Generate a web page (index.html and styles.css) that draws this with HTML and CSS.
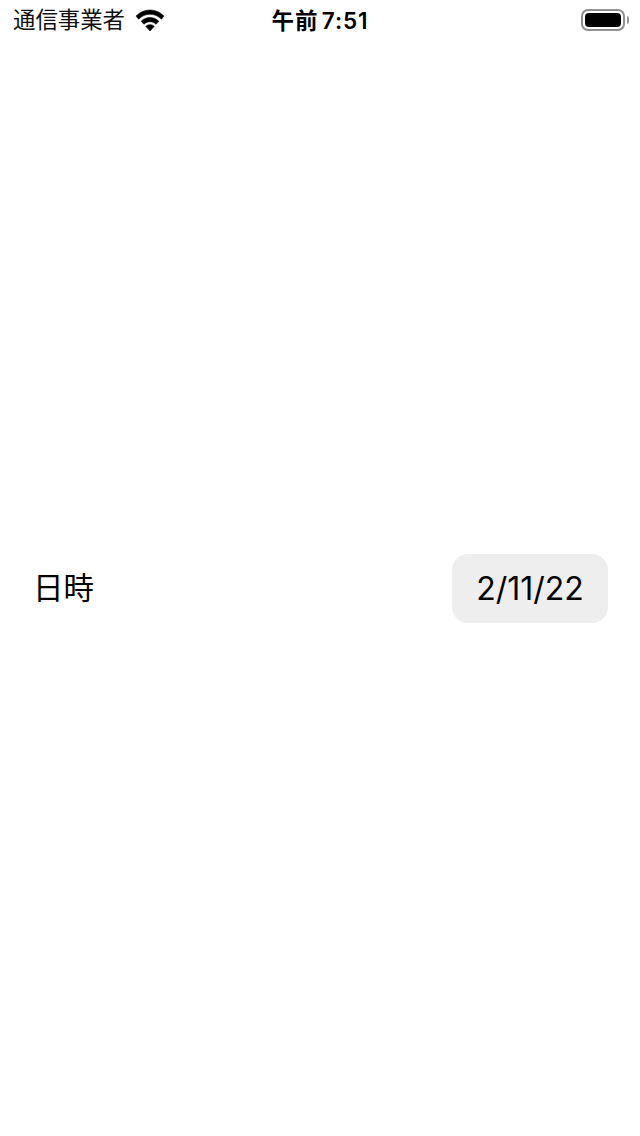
FILE: index.html
```html
<!DOCTYPE html>
<html lang="ja">
<head>
<meta charset="utf-8">
<title>日時</title>
<link rel="stylesheet" href="styles.css">
</head>
<body>
<div class="screen">
  <header class="status">
    <div class="status-left">
      <span class="carrier">通信事業者</span>
      <svg class="wifi" width="28" height="21" viewBox="1.6 3 26.8 18.6" preserveAspectRatio="none">
        <path d="M15 3C9.8 3 5.3 5 1.6 8.4l2.6 2.7C7.1 8.4 10.8 6.8 15 6.8s7.9 1.6 10.8 4.3l2.6-2.7C24.7 5 20.2 3 15 3z"/>
        <path d="M15 9.6c-3.3 0-6.2 1.3-8.5 3.3l2.7 2.7c1.5-1.4 3.5-2.2 5.8-2.2s4.3.8 5.8 2.2l2.7-2.7c-2.3-2-5.2-3.3-8.5-3.3z"/>
        <path d="M15 16c-1.6 0-3 .6-4.1 1.5L15 21.6l4.1-4.1C18 16.6 16.6 16 15 16z"/>
      </svg>
    </div>
    <div class="clock">午前 7:51</div>
    <div class="status-right">
      <div class="battery"><div class="battery-fill"></div></div>
      <div class="battery-cap"></div>
    </div>
  </header>
  <main class="content">
    <div class="row">
      <span class="label">日時</span>
      <span class="date">2/11/22</span>
    </div>
  </main>
</div>
</body>
</html>
```
FILE: styles.css
```css
* { box-sizing: border-box; }
html, body { margin: 0; padding: 0; background: #fff; }
body {
  font-family: "Inter", "Liberation Sans", "Noto Sans CJK JP", sans-serif;
  color: #000;
}
.screen {
  width: 640px;
  height: 1136px;
  display: flex;
  flex-direction: column;
}
.status {
  height: 40px;
  flex: none;
  display: grid;
  grid-template-columns: 1fr auto 1fr;
  grid-template-rows: 40px;
  align-items: center;
  padding: 0 11px 0 13px;
}
.status-left {
  display: flex;
  align-items: center;
  gap: 11px;
}
.carrier {
  font-family: "Noto Sans CJK JP", sans-serif;
  font-size: 22.4px;
  line-height: 40px;
  padding-bottom: 4px;
  color: #111;
  font-weight: 400;
}
.wifi { display: block; fill: #000; stroke: #000; stroke-width: 0.5; margin-bottom: -1px; overflow: visible; }
.clock {
  font-family: "Inter", "Noto Sans CJK JP", sans-serif;
  font-size: 22.5px;
  font-weight: 600;
  line-height: 40px;
  letter-spacing: 0.9px;
  word-spacing: -3px;
  padding-top: 2px;
  margin-left: -2px;
  text-align: center;
}
.status-right {
  display: flex;
  justify-content: flex-end;
  align-items: center;
  gap: 2px;
  padding-bottom: 1px;
}
.battery {
  width: 44px;
  height: 22px;
  border: 2px solid #8e8e8e;
  border-radius: 7px;
  padding: 2px;
}
.battery-fill {
  height: 100%;
  background: #000;
  border-radius: 4px;
}
.battery-cap {
  width: 2px;
  height: 8px;
  background: #999;
  border-radius: 0 2px 2px 0;
}
.content {
  flex: 1;
  display: flex;
  flex-direction: column;
  justify-content: center;
  padding: 0 32px 0 33px;
}
.row {
  display: flex;
  align-items: center;
  justify-content: space-between;
  margin-top: 1px;
}
.label {
  font-family: "Noto Sans CJK JP", sans-serif;
  font-size: 30.5px;
  line-height: 40px;
  padding-bottom: 6px;
  font-weight: 400;
}
.date {
  width: 156px;
  height: 69px;
  display: flex;
  align-items: center;
  justify-content: center;
  background: #eeeeef;
  border-radius: 16px;
  font-size: 32px;
  font-weight: 385;
}
```
